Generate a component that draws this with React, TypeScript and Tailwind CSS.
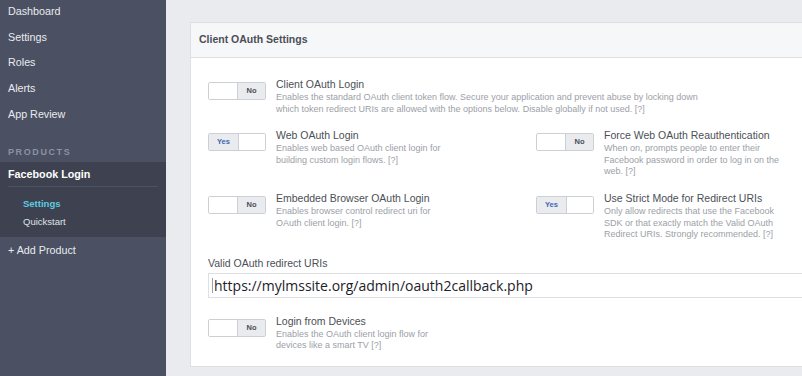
import React from "react";

function Toggle({ on }: { on: boolean }) {
  return (
    <div className="mt-[6px] flex h-[18px] w-[58px] shrink-0 overflow-hidden rounded-[2px] border border-[#ccd0d5]">
      {on ? (
        <>
          <div className="flex w-[29px] items-center justify-center bg-[#e9ebee] text-[7.5px] font-bold text-[#4267b2]">Yes</div>
          <div className="flex-1 border-l border-[#ccd0d5] bg-white" />
        </>
      ) : (
        <>
          <div className="w-[28px] bg-white" />
          <div className="flex flex-1 items-center justify-center border-l border-[#ccd0d5] bg-[#e9ebee] text-[7.5px] font-bold text-[#4b4f56]">No</div>
        </>
      )}
    </div>
  );
}

function Item({ on, title, desc, descW }: { on: boolean; title: string; desc: string; descW: string }) {
  return (
    <div className="flex items-start gap-[10px]">
      <Toggle on={on} />
      <div>
        <div className="text-[10.5px] leading-[16px] text-[#4b4f56]">{title}</div>
        <div className={`text-[9px] leading-[11.5px] text-[#9ca0a8] ${descW}`}>{desc}</div>
      </div>
    </div>
  );
}

export default function App() {
  return (
    <div className="flex h-[376px] w-[802px] overflow-hidden bg-[#e9ebee]" style={{ fontFamily: '"Liberation Sans", Arial, sans-serif' }}>
      <aside className="flex w-[166px] shrink-0 flex-col bg-[#4b5063] text-[10.75px] text-[#e9ebee]">
        <div className="-mt-[2px] flex h-[25.75px] shrink-0 items-center pl-[8px]">Dashboard</div>
        <div className="flex h-[25.75px] shrink-0 items-center pl-[8px]">Settings</div>
        <div className="flex h-[25.75px] shrink-0 items-center pl-[8px]">Roles</div>
        <div className="flex h-[25.75px] shrink-0 items-center pl-[8px]">Alerts</div>
        <div className="flex h-[25.75px] shrink-0 items-center pl-[8px]">App Review</div>
        <div className="flex h-[35.25px] shrink-0 items-end pb-[3px] pl-[8px] text-[9px] font-bold tracking-[1.6px] text-[#8b92a3]">PRODUCTS</div>
        <div className="flex h-[75px] shrink-0 flex-col bg-[#3e4250]">
          <div className="mx-[8px] flex h-[25px] items-center border-b border-[#4e5362] text-[10.75px] font-bold text-white">Facebook Login</div>
          <div className="mt-[9px] flex h-[17px] items-center pl-[23px] text-[9.5px] font-bold text-[#5ccbe0]">Settings</div>
          <div className="flex h-[18px] items-center pl-[23px] text-[9.5px] text-[#dfe2e8]">Quickstart</div>
        </div>
        <div className="flex h-[26px] shrink-0 items-center pl-[8px]">+ Add Product</div>
      </aside>
      <main className="flex-1 pl-[24px] pt-[22px]">
        <div className="h-[345px] w-[640px] border border-[#dddfe2] bg-white">
          <div className="flex h-[35px] items-center border-b border-[#dddfe2] bg-[#f6f7f9] pl-[8px] text-[10.5px] font-bold text-[#4b4f56]">
            Client OAuth Settings
          </div>
          <div className="pl-[17px] pt-[18px]">
            <Item
              on={false}
              title="Client OAuth Login"
              desc="Enables the standard OAuth client token flow. Secure your application and prevent abuse by locking down which token redirect URIs are allowed with the options below. Disable globally if not used.  [?]"
              descW="w-[440px]"
            />
            <div className="mt-[12px] grid grid-cols-[328px_1fr] gap-y-[12.5px]">
              <Item
                on={true}
                title="Web OAuth Login"
                desc="Enables web based OAuth client login for building custom login flows.  [?]"
                descW="w-[180px]"
              />
              <Item
                on={false}
                title="Force Web OAuth Reauthentication"
                desc="When on, prompts people to enter their Facebook password in order to log in on the web. [?]"
                descW="w-[180px]"
              />
              <Item
                on={false}
                title="Embedded Browser OAuth Login"
                desc="Enables browser control redirect uri for OAuth client login.  [?]"
                descW="w-[180px]"
              />
              <Item
                on={true}
                title="Use Strict Mode for Redirect URIs"
                desc="Only allow redirects that use the Facebook SDK or that exactly match the Valid OAuth Redirect URIs. Strongly recommended.  [?]"
                descW="w-[180px]"
              />
            </div>
            <div className="mt-[15px] text-[10.5px] leading-[14px] text-[#4b4f56]">Valid OAuth redirect URIs</div>
            <div className="mt-[3px] flex h-[25px] items-center border border-[#dddfe2] bg-white pl-[3px]">
              <span className="mr-[1px] h-[15px] w-px bg-[#9ca0a8]" />
              <span className="text-[14px] text-[#1d2129]" style={{ fontFamily: '"Open Sans", "Noto Sans", sans-serif' }}>
                https://mylmssite.org/admin/oauth2callback.php
              </span>
            </div>
            <div className="mt-[15px]">
              <Item
                on={false}
                title="Login from Devices"
                desc="Enables the OAuth client login flow for devices like a smart TV [?]"
                descW="w-[180px]"
              />
            </div>
          </div>
        </div>
      </main>
    </div>
  );
}
